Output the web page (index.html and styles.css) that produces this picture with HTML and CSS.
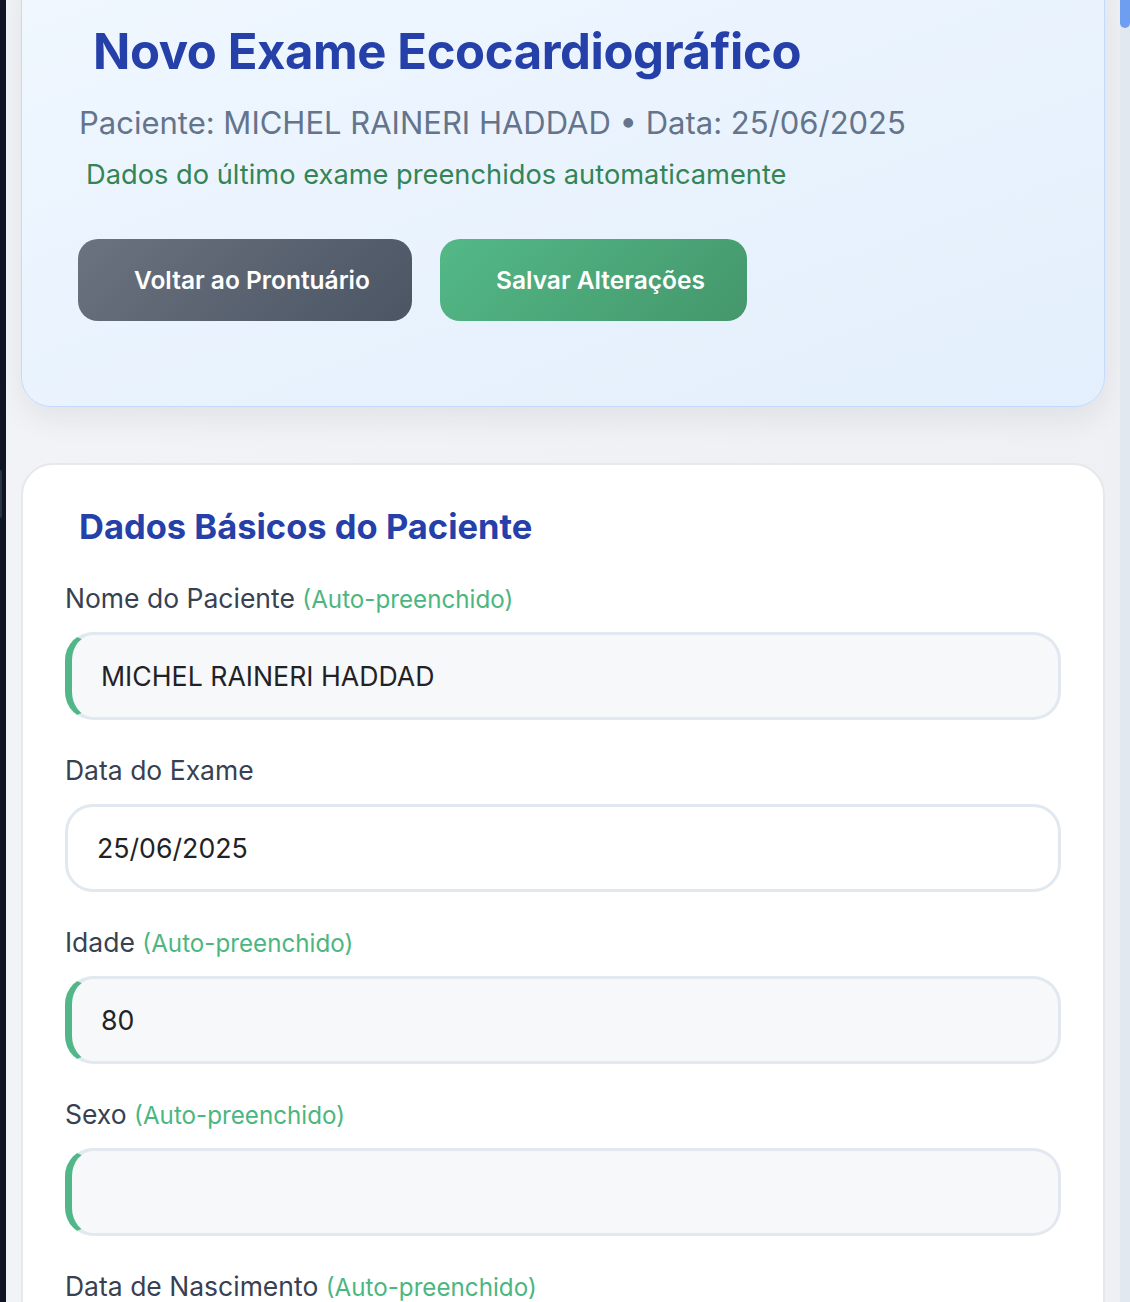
FILE: index.html
```html
<!DOCTYPE html>
<html lang="pt-BR">
<head>
<meta charset="utf-8">
<title>Novo Exame Ecocardiográfico</title>
<link rel="stylesheet" href="styles.css">
</head>
<body>
<div class="app">
  <aside class="sidebar"><span class="sidebar-handle"></span></aside>
  <main class="main">
    <section class="header-card">
      <h1 class="title">Novo Exame Ecocardiográfico</h1>
      <p class="subtitle">Paciente: MICHEL RAINERI HADDAD • Data: 25/06/2025</p>
      <p class="autofill-note">Dados do último exame preenchidos automaticamente</p>
      <div class="actions">
        <button class="btn btn-gray" type="button">Voltar ao Prontuário</button>
        <button class="btn btn-green" type="button">Salvar Alterações</button>
      </div>
    </section>

    <section class="form-card">
      <h2 class="section-title">Dados Básicos do Paciente</h2>

      <div class="form-group">
        <label class="label">Nome do Paciente <span class="auto">(Auto-preenchido)</span></label>
        <div class="input input-auto">MICHEL RAINERI HADDAD</div>
      </div>

      <div class="form-group">
        <label class="label">Data do Exame</label>
        <div class="input">25/06/2025</div>
      </div>

      <div class="form-group">
        <label class="label">Idade <span class="auto">(Auto-preenchido)</span></label>
        <div class="input input-auto">80</div>
      </div>

      <div class="form-group">
        <label class="label">Sexo <span class="auto">(Auto-preenchido)</span></label>
        <div class="input input-auto"></div>
      </div>

      <div class="form-group">
        <label class="label">Data de Nascimento <span class="auto">(Auto-preenchido)</span></label>
        <div class="input input-auto">22/03/1945</div>
      </div>
    </section>
  </main>
  <div class="scrollbar"><span class="scroll-thumb"></span></div>
</div>
</body>
</html>
```

FILE: styles.css
```css
* { box-sizing: border-box; }

html, body {
  margin: 0;
  padding: 0;
  height: 100%;
  overflow: hidden;
}

body {
  font-family: Inter, "Noto Sans", "Liberation Sans", sans-serif;
  background: linear-gradient(90deg, #f2f3f6 0%, #eff0f4 100%);
  color: #1f2937;
}

.app {
  display: flex;
  min-height: 100%;
}

.sidebar {
  width: 6px;
  flex: 0 0 6px;
  background: #0f1524;
  position: relative;
}

.sidebar-handle {
  position: absolute;
  left: 0;
  top: 470px;
  width: 2px;
  height: 48px;
  background: #2b3242;
  border-radius: 0 2px 2px 0;
}

.main {
  flex: 1;
  padding: 0 15px;
  min-width: 0;
}

.scrollbar {
  width: 10px;
  flex: 0 0 10px;
  background: #e2e8f0;
  position: relative;
}

.scroll-thumb {
  position: absolute;
  left: 0;
  top: 0;
  width: 10px;
  height: 28px;
  background: #6e9ef0;
  border-radius: 0 0 5px 5px;
}

/* Header card */
.header-card {
  margin-top: -40px;
  padding: 58px 56px 85px;
  background: linear-gradient(160deg, #f0f7ff 0%, #e3effc 100%);
  border: 1.5px solid #c3dafd;
  border-radius: 30px;
  box-shadow: 0 12px 30px rgba(15, 23, 42, 0.07);
}

.title {
  margin: 0 0 16px 15px;
  font-size: 49px;
  line-height: 65px;
  font-weight: 700;
  color: #2540a8;
  letter-spacing: -0.4px;
}

.subtitle {
  margin: 0 0 10px 1px;
  font-size: 31px;
  line-height: 45px;
  color: #64748b;
}

.autofill-note {
  margin: 0 0 44px 8px;
  font-size: 27.25px;
  line-height: 40px;
  color: #338556;
}

.actions {
  display: flex;
  gap: 28px;
}

.btn {
  border: none;
  border-radius: 20px;
  padding: 26px 0 26px 14px;
  font-family: inherit;
  font-size: 24.5px;
  line-height: 30px;
  font-weight: 600;
  color: #ffffff;
  cursor: pointer;
}

.btn-gray {
  width: 334px;
  background: linear-gradient(135deg, #6b7280 0%, #4b5563 100%);
}

.btn-green {
  width: 307px;
  background: linear-gradient(135deg, #53b887 0%, #44976b 100%);
}

/* Form card */
.form-card {
  margin-top: 56px;
  padding: 40px 42px 40px;
  background: #ffffff;
  border: 2px solid #e6e8ec;
  border-radius: 32px;
}

.section-title {
  margin: 0 0 32px 14px;
  font-size: 34.5px;
  line-height: 43px;
  font-weight: 700;
  color: #2540a8;
}

.form-group {
  margin-bottom: 32px;
}

.label {
  display: block;
  height: 36px;
  margin-bottom: 16px;
  font-size: 26.5px;
  line-height: 36px;
  font-weight: 400;
  color: #374151;
}

.auto {
  font-size: 24.2px;
  line-height: 1;
  font-weight: 400;
  color: #4cb67f;
}

.input {
  height: 88px;
  display: flex;
  align-items: center;
  padding: 0 29px;
  border: 3px solid #e2e8f0;
  border-radius: 28px;
  background: #ffffff;
  font-size: 26.7px;
  color: #1f2328;
}

.input-auto {
  background: #f7f8fa;
  border-left: 7px solid #52b788;
}
```
